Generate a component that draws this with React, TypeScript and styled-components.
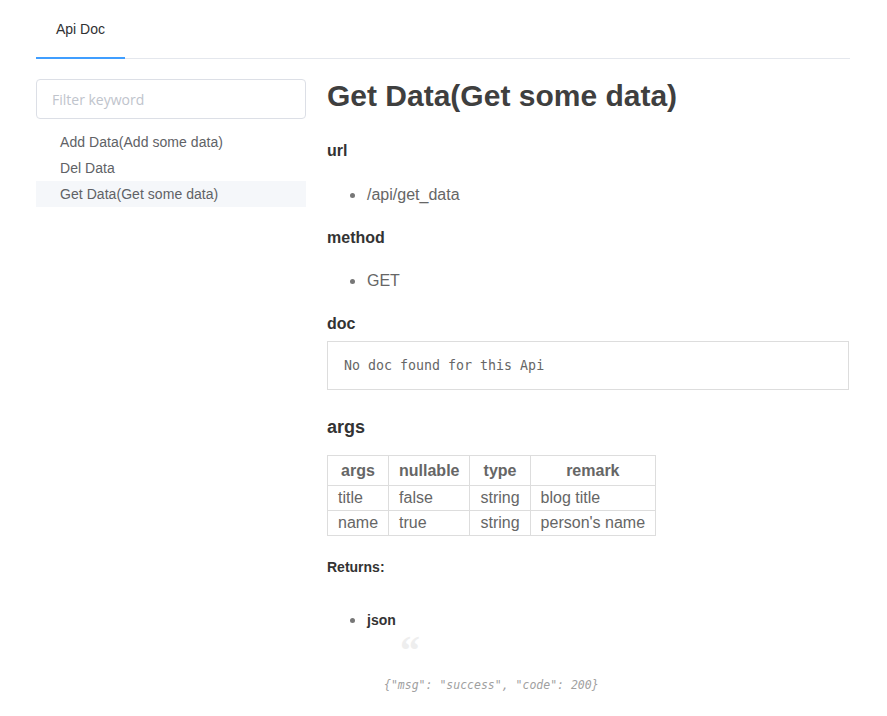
import React from "react";
import styled, {createGlobalStyle} from "styled-components";

const GlobalStyle = createGlobalStyle`
    body {
        margin: 0;
        background: #fff;
        font-family: "Liberation Sans", Arial, sans-serif;
        color: #666;
    }
`

const PAGE = styled.div`
    width: 814px;
    margin: 0 auto 0 36px;
`

const TABS = styled.div`
    display: flex;
    border-bottom: 1px solid #e4e7ed;
`

const TAB = styled.div<{active?: boolean}>`
    height: 59px;
    line-height: 58px;
    padding: 0 20px;
    box-sizing: border-box;
    font-size: 14px;
    color: ${props => props.active ? '#303133' : '#909399'};
    border-bottom: 2px solid ${props => props.active ? '#409eff' : 'transparent'};
    margin-bottom: -1px;
`

const BODY = styled.div`
    display: grid;
    grid-template-columns: 270px 1fr;
    column-gap: 21px;
`

const SIDEBAR = styled.aside`
    padding-top: 20px;
`

const FILTER = styled.input`
    width: 100%;
    height: 40px;
    box-sizing: border-box;
    border: 1px solid #dcdfe6;
    border-radius: 4px;
    padding: 0 15px;
    font-family: "Open Sans", sans-serif;
    font-size: 14px;
    color: #606266;
    outline: none;

    &::placeholder {
        color: #c0c4cc;
    }
`

const TREE = styled.ul`
    list-style: none;
    margin: 10px 0 0;
    padding: 0;
`

const NODE = styled.li<{current?: boolean}>`
    height: 26px;
    line-height: 26px;
    padding-left: 24px;
    font-size: 14px;
    letter-spacing: 0.05px;
    color: #606266;
    background: ${props => props.current ? '#f5f7fa' : 'transparent'};
`

const MAIN = styled.main`
    color: #666;
`

const TITLE = styled.h1`
    margin: 19px 0 0;
    font-size: 30px;
    line-height: 36px;
    color: #3f3f3f;
`

const H3 = styled.h3<{gap?: number}>`
    margin: ${props => props.gap ?? 19}px 0 0;
    font-size: 16px;
    line-height: 24px;
    color: #333;
`

const H2 = styled.h2`
    margin: 24px 0 0;
    font-size: 18px;
    line-height: 27px;
    color: #333;
`

const BULLETS = styled.ul<{gap?: number}>`
    margin: ${props => props.gap ?? 19}px 0 0;
    padding-left: 40px;
    list-style: disc;
`

const ITEM = styled.li<{strong?: boolean}>`
    font-size: ${props => props.strong ? '14px' : '16px'};
    line-height: ${props => props.strong ? '21px' : '24px'};
    font-weight: ${props => props.strong ? 700 : 400};
    color: ${props => props.strong ? '#333' : '#666'};

    &::marker {
        color: #777;
        font-size: 18px;
    }
`

const DOC = styled.pre`
    margin: 5px 0 0;
    width: 522px;
    box-sizing: border-box;
    border: 1px solid #ddd;
    padding: 15px 16px;
    font-family: "DejaVu Sans Mono", "Liberation Mono", monospace;
    font-size: 13.3px;
    line-height: 17px;
    color: #666;
`

const TABLE = styled.table`
    margin-top: 14px;
    border-collapse: collapse;
    font-size: 16px;
    color: #666;

    th, td {
        border: 1px solid #ddd;
        padding: 0 10px;
    }

    th {
        height: 29px;
        text-align: center;
        font-weight: 700;
    }

    td {
        height: 24px;
        text-align: left;
    }
`

const RETURNS = styled.h4`
    margin: 21px 0 0;
    font-size: 14px;
    line-height: 21px;
    color: #333;
`

const QUOTE = styled.blockquote`
    margin: 6px 0 0 17px;
    padding: 0;
    position: relative;
    padding-top: 37px;
    font-weight: 400;

    &::before {
        content: "\\201C";
        position: absolute;
        top: -6px;
        left: 16px;
        font-family: "Liberation Serif", serif;
        font-weight: 700;
        font-size: 40px;
        line-height: 40px;
        color: #eee;
    }
`

const CODE = styled.code`
    font-family: "DejaVu Sans Mono", monospace;
    font-style: italic;
    font-weight: 400;
    font-size: 11.5px;
    color: #a0a0a0;
`

const args = [
    {name: "title", nullable: "false", type: "string", remark: "blog title"},
    {name: "name", nullable: "true", type: "string", remark: "person's name"},
]

const App = () => {
    return (
        <PAGE>
            <GlobalStyle/>
            <TABS>
                <TAB active>Api Doc</TAB>
            </TABS>
            <BODY>
                <SIDEBAR>
                    <FILTER placeholder="Filter keyword"/>
                    <TREE>
                        <NODE>Add Data(Add some data)</NODE>
                        <NODE>Del Data</NODE>
                        <NODE current>Get Data(Get some data)</NODE>
                    </TREE>
                </SIDEBAR>
                <MAIN>
                    <TITLE>Get Data(Get some data)</TITLE>
                    <H3 gap={25}>url</H3>
                    <BULLETS><ITEM>/api/get_data</ITEM></BULLETS>
                    <H3>method</H3>
                    <BULLETS gap={18}><ITEM>GET</ITEM></BULLETS>
                    <H3>doc</H3>
                    <DOC>No doc found for this Api</DOC>
                    <H2>args</H2>
                    <TABLE>
                        <thead>
                        <tr>
                            <th>args</th>
                            <th>nullable</th>
                            <th>type</th>
                            <th>remark</th>
                        </tr>
                        </thead>
                        <tbody>
                        {args.map(a => (
                            <tr key={a.name}>
                                <td>{a.name}</td>
                                <td>{a.nullable}</td>
                                <td>{a.type}</td>
                                <td>{a.remark}</td>
                            </tr>
                        ))}
                        </tbody>
                    </TABLE>
                    <RETURNS>Returns:</RETURNS>
                    <BULLETS gap={31}>
                        <ITEM strong>
                            json
                            <QUOTE>
                                <CODE>{'{"msg": "success", "code": 200}'}</CODE>
                            </QUOTE>
                        </ITEM>
                    </BULLETS>
                </MAIN>
            </BODY>
        </PAGE>
    )
}

export default App;
